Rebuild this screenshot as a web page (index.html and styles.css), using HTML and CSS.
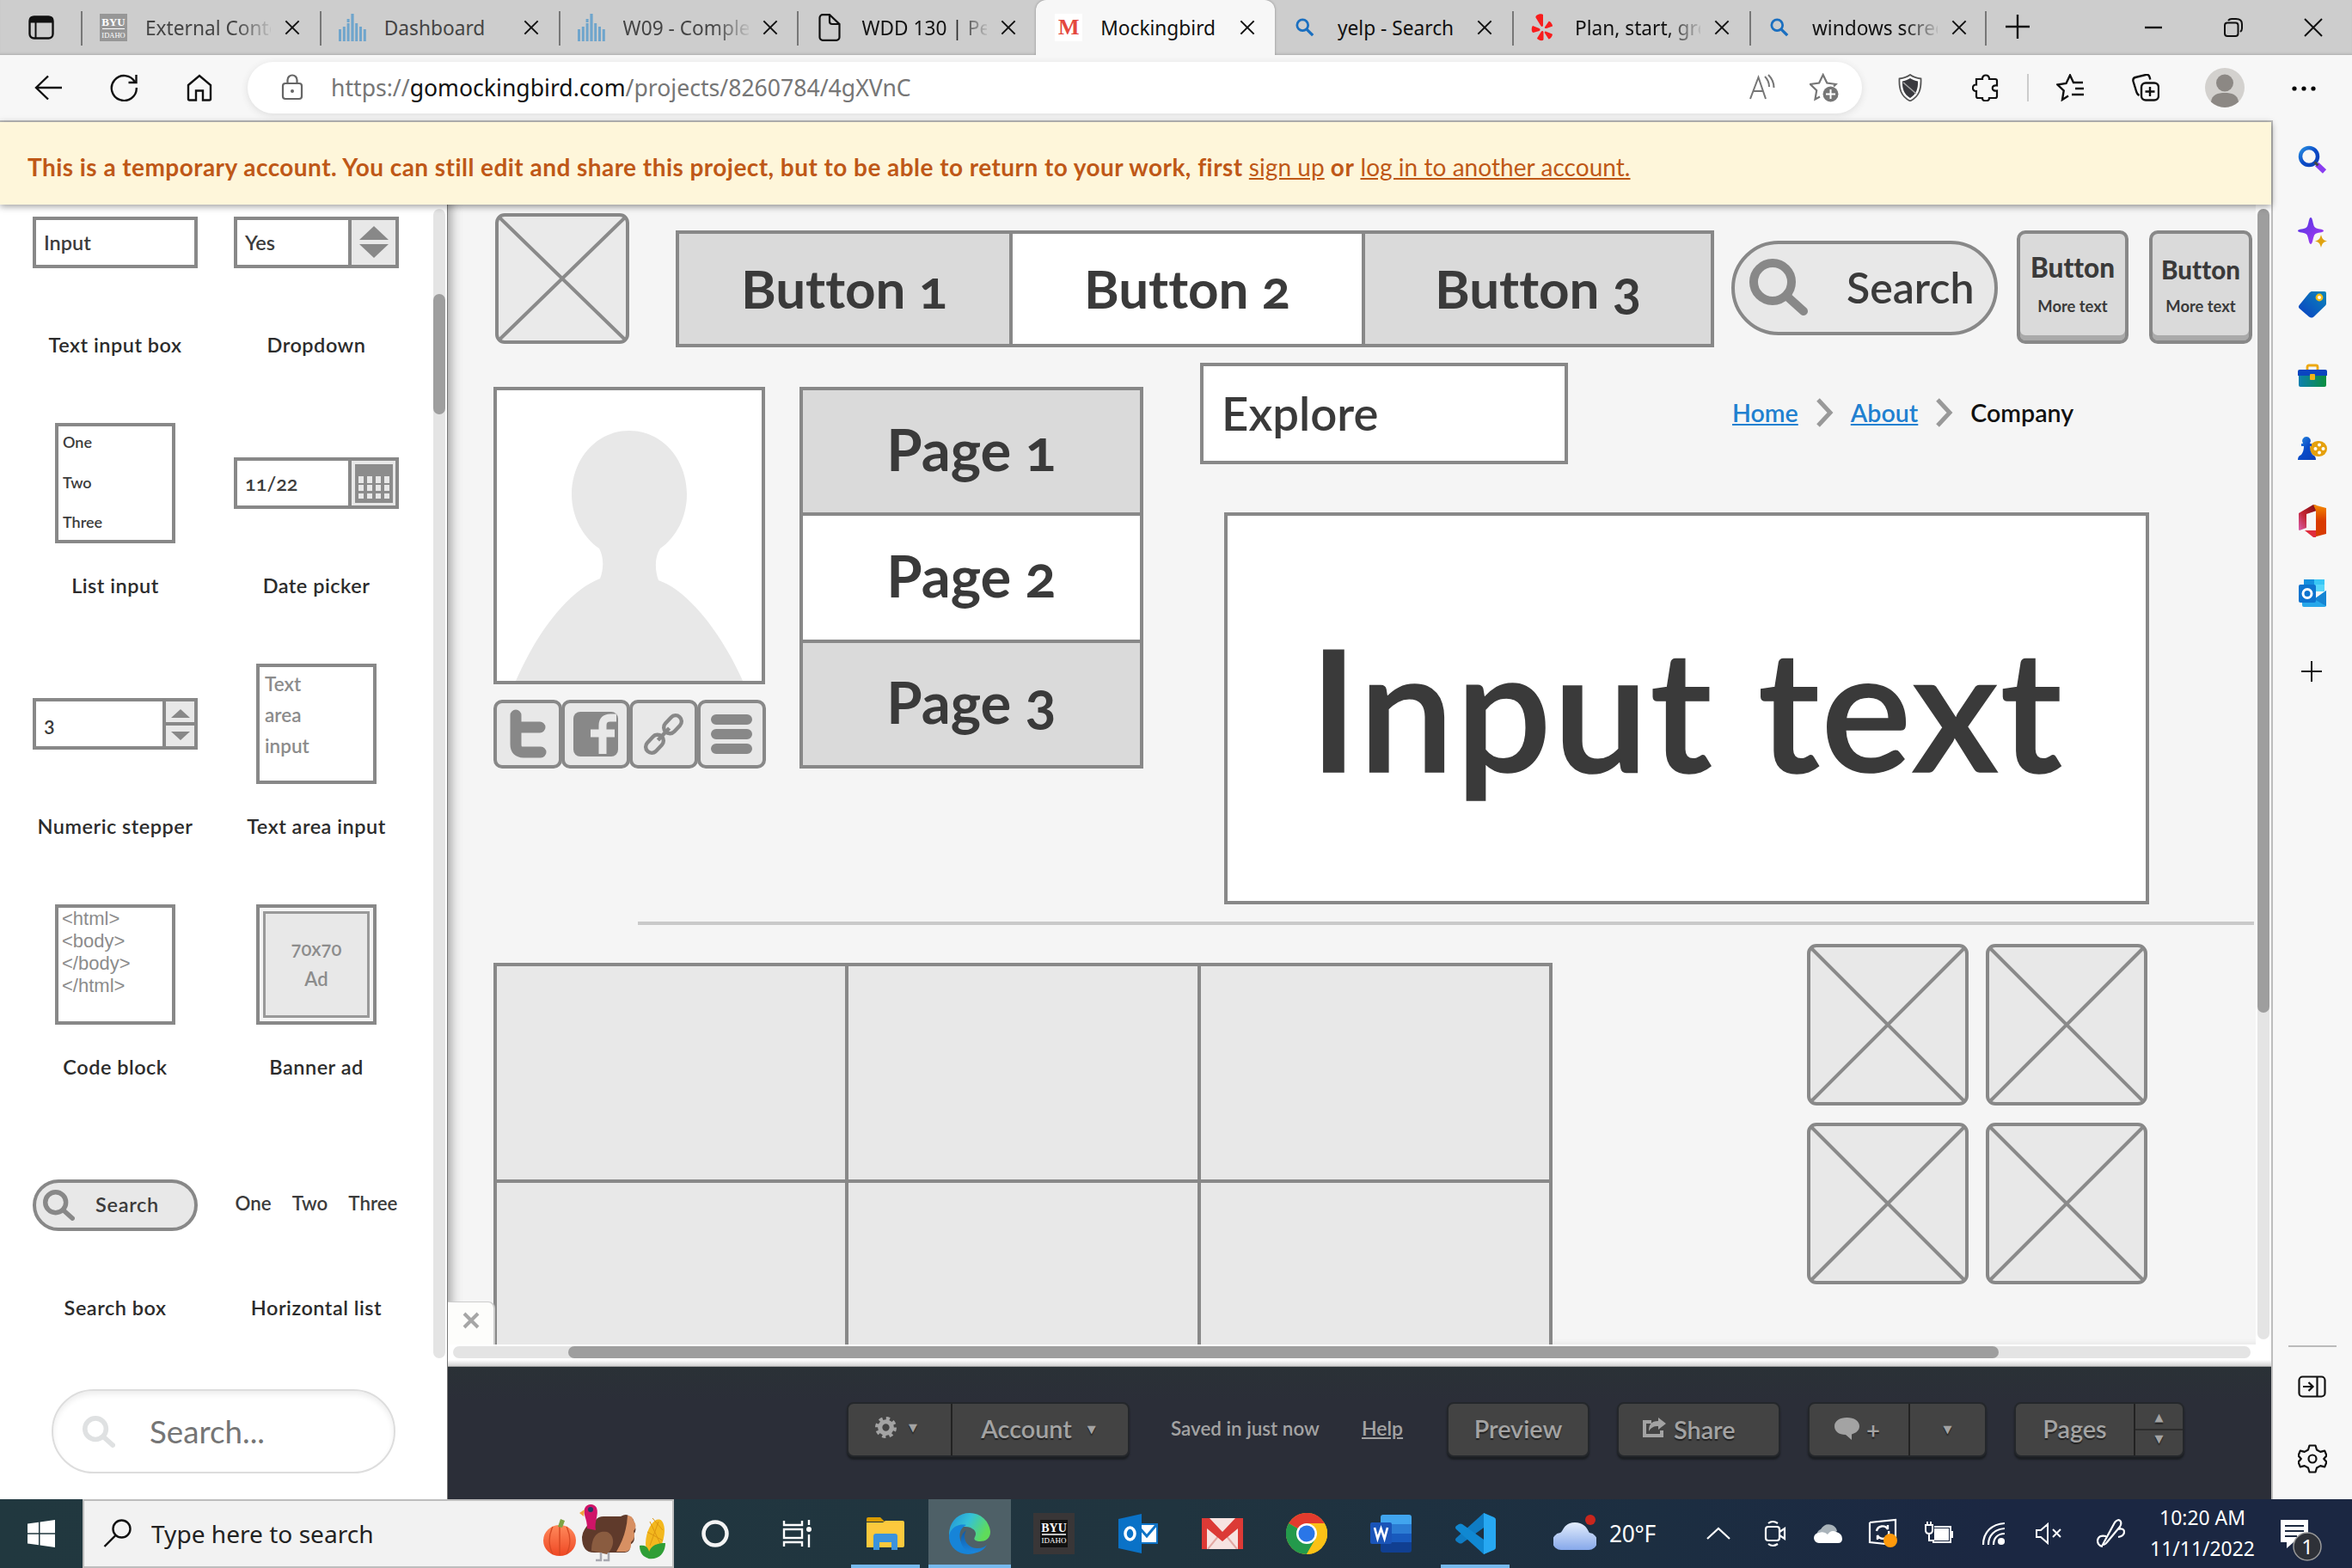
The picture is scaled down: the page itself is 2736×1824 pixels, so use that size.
FILE: index.html
```html
<!DOCTYPE html>
<html lang="en">
<head>
<meta charset="utf-8">
<title>Mockingbird</title>
<link rel="stylesheet" href="styles.css">
</head>
<body>
<svg class="defs" width="0" height="0">
  <defs>
    <linearGradient id="gBlue" x1="0" y1="0" x2="1" y2="1"><stop offset="0" stop-color="#2a8fe0"/><stop offset=".5" stop-color="#0a4bc8"/><stop offset="1" stop-color="#0d3fb5"/></linearGradient>
    <linearGradient id="gPurple" x1="0" y1="0" x2="1" y2="1"><stop offset="0" stop-color="#4a35e0"/><stop offset="1" stop-color="#b13bf5"/></linearGradient>
    <linearGradient id="gTag" x1="0" y1="1" x2="1" y2="0"><stop offset="0" stop-color="#0b3fc4"/><stop offset="1" stop-color="#0b86b8"/></linearGradient>
    <linearGradient id="gBox" x1="0" y1="0" x2="1" y2="0"><stop offset="0" stop-color="#0d7fb0"/><stop offset="1" stop-color="#0a8f3f"/></linearGradient>
    <linearGradient id="gOffL" x1="0" y1="1" x2="1" y2="0"><stop offset="0" stop-color="#d95fae"/><stop offset=".45" stop-color="#c22431"/><stop offset="1" stop-color="#7c0d12"/></linearGradient>
    <linearGradient id="gOffR" x1="0" y1="0" x2="0" y2="1"><stop offset="0" stop-color="#f58a00"/><stop offset=".5" stop-color="#d93a00"/><stop offset="1" stop-color="#d83b01"/></linearGradient>
    <linearGradient id="gEdge" x1="0" y1="0" x2="1" y2=".4"><stop offset="0" stop-color="#1f8fd6"/><stop offset=".5" stop-color="#35c1d8"/><stop offset="1" stop-color="#5fdc5a"/></linearGradient>
    <linearGradient id="gEdge2" x1="0" y1="0" x2="0" y2="1"><stop offset="0" stop-color="#0d58a6"/><stop offset="1" stop-color="#1b86dc"/></linearGradient>
    <linearGradient id="gCloud" x1="0" y1="0" x2="0" y2="1"><stop offset="0" stop-color="#e3edfc"/><stop offset="1" stop-color="#86a8ea"/></linearGradient>
    <linearGradient id="gPumpkin" x1="0" y1="0" x2="0" y2="1"><stop offset="0" stop-color="#ff8a5c"/><stop offset="1" stop-color="#ee4723"/></linearGradient>
    <symbol id="x" viewBox="0 0 20 20"><path d="M1.500 1.500 18.500 18.500M18.500 1.500 1.500 18.500" stroke="currentColor" stroke-width="2.200" fill="none"/></symbol>
    <symbol id="lens" viewBox="0 0 24 24"><circle cx="9" cy="9" r="7" fill="none" stroke="#1a6fc0" stroke-width="3"/><path d="m14 14 8 8" stroke="#1a6fc0" stroke-width="3.600"/></symbol>
    <symbol id="bars" viewBox="0 0 32 32"><path d="M0 18h3v14H0zM4.800 15h3v17h-3zM9.600 11h3v21h-3zM14.400 0h3.200v32h-3.200zM19.200 11h3v21h-3zM24 15h3v17h-3zM28.800 18h3v14h-3zM9.600 6h3v4h-3z" fill="#6fa5cc"/></symbol>
    <symbol id="byu" viewBox="0 0 32 32"><rect width="32" height="32" fill="#979797"/><text x="16" y="14" text-anchor="middle" class="byu-a">BYU</text><path d="M3 17.500h26" stroke="#fff" stroke-width="1"/><text x="16" y="28" text-anchor="middle" class="byu-b">IDAHO</text></symbol>
    <symbol id="magnify" viewBox="0 0 68 66"><circle cx="27" cy="27" r="22" fill="none" stroke="currentColor" stroke-width="10"/><path d="m43 43 20 18" stroke="currentColor" stroke-width="10" stroke-linecap="round"/></symbol>
    <symbol id="ph" viewBox="0 0 188 188"><rect x="2" y="2" width="184" height="184" rx="9" fill="#e8e8e8" stroke="#888" stroke-width="4"/><path d="M5 5 183 183M183 5 5 183" stroke="#8a8a8a" stroke-width="4"/></symbol>
  </defs>
</svg>

<header class="tabstrip">
  <div class="tabmenu"><svg width="30" height="28" viewBox="0 0 30 28"><rect x="1.500" y="1.500" width="27" height="25" rx="5" fill="none" stroke="#111" stroke-width="2.400"/><path d="M1 8.500V5a4 4 0 0 1 4-4h20a4 4 0 0 1 4 4v3.500z" fill="#111"/><path d="M8.500 8v18" stroke="#111" stroke-width="2"/></svg></div>
  <div class="tab"><svg class="fav"><use href="#byu"/></svg><span class="ttl fade dim">External Conte</span><svg class="cl"><use href="#x"/></svg></div>
  <div class="tab"><svg class="fav"><use href="#bars"/></svg><span class="ttl dim">Dashboard</span><svg class="cl"><use href="#x"/></svg></div>
  <div class="tab"><svg class="fav"><use href="#bars"/></svg><span class="ttl fade dim">W09 - Comple</span><svg class="cl"><use href="#x"/></svg></div>
  <div class="tab"><svg class="fav" viewBox="0 0 32 32"><path d="M16 1.200H8A3.500 3.500 0 0 0 4.500 4.700v22.600A3.500 3.500 0 0 0 8 30.800h16a3.500 3.500 0 0 0 3.500-3.500V12zM16 1.200V9a3 3 0 0 0 3 3h8.500" fill="none" stroke="#111" stroke-width="2.200"/></svg><span class="ttl fade">WDD 130 | Pe</span><svg class="cl"><use href="#x"/></svg></div>
  <div class="tab on"><span class="fav em">M</span><span class="ttl">Mockingbird</span><svg class="cl"><use href="#x"/></svg></div>
  <div class="tab"><svg class="fav sm"><use href="#lens"/></svg><span class="ttl">yelp - Search</span><svg class="cl"><use href="#x"/></svg></div>
  <div class="tab"><svg class="fav" viewBox="0 0 32 32" fill="#f81d1d"><path d="M9 1.500C12-.5 15 0 16 1v12.500c0 1.500-1.500 2-2.500.8L7.500 4.500C7 3.500 8 2 9 1.500zM4 14l7.500 3c1.500.8 1.500 2.500 0 3L4.500 22C2.500 22 2 16 4 14zM14 20.500c1-1 2.500-.5 2.500 1V30c-1 2.500-7 .5-7.500-1.500zM19 20.500l7.500 3c1.500 1-2 6.500-4 6l-4.500-7c-.7-1.200 0-2 1-2zM18 15.500l4.500-6.500c1.500-1 5 4 4.500 5.500l-7 2.500c-1.500.3-2.500-.5-2-1.500z"/></svg><span class="ttl fade">Plan, start, gro</span><svg class="cl"><use href="#x"/></svg></div>
  <div class="tab"><svg class="fav sm"><use href="#lens"/></svg><span class="ttl fade">windows scree</span><svg class="cl"><use href="#x"/></svg></div>
  <svg class="newtab" viewBox="0 0 28 28"><path d="M14 0v28M0 14h28" stroke="#111" stroke-width="2.400"/></svg>
  <div class="wincontrols">
    <svg width="22" height="22"><path d="M1 11h20" stroke="#111" stroke-width="2.400"/></svg>
    <svg width="22" height="22" fill="none" stroke="#111" stroke-width="2"><rect x="1" y="5.500" width="15.500" height="15.500" rx="3"/><path d="M5 3c1-1.500 2-2 4-2h5c4 0 7 2 7 6v5c0 2-.5 3-2 4"/></svg>
    <svg width="22" height="22"><path d="m1 1 20 20M21 1 1 21" stroke="#111" stroke-width="2"/></svg>
  </div>
</header>

<nav class="toolbar">
  <svg class="ic" viewBox="0 0 32 32"><path d="M16 2.500 2 16l14 13.500M2 16h30" fill="none" stroke="#111" stroke-width="2.400"/></svg>
  <svg class="ic" viewBox="0 0 32 32"><path d="M29 9.500A14.500 14.500 0 1 0 30.800 16M30.500 1v9h-9" fill="none" stroke="#111" stroke-width="2.400"/></svg>
  <svg class="ic" viewBox="0 0 32 32"><path d="M3 13 16 2l13 11v16a1.500 1.500 0 0 1-1.500 1.500H20V19.500h-8v11H4.500A1.500 1.500 0 0 1 3 29z" fill="none" stroke="#111" stroke-width="2.400"/></svg>
  <div class="address">
    <svg class="lock" viewBox="0 0 26 32"><rect x="2" y="11" width="22" height="18" rx="3" fill="none" stroke="#666" stroke-width="2.200"/><path d="M7.500 11V7a5.500 5.500 0 0 1 11 0v4" fill="none" stroke="#666" stroke-width="2.200"/><circle cx="13" cy="20" r="2" fill="#666"/></svg>
    <span class="url">https://<b>gomockingbird.com</b>/projects/8260784/4gXVnC</span>
    <svg class="ic aa" viewBox="0 0 32 32" fill="none" stroke="#767676" stroke-width="2"><path d="m2 29 9.500-25L20 29M5 20h12.500M19 3c3 3 5 6 5 12M23 1c4 4 6.500 9 6.500 15"/></svg>
    <svg class="ic" viewBox="0 0 34 34"><path d="M12 27.500 6.500 30.500 8.200 20.200.8 13l10.300-1.500L15.700 2l4.600 9.500L30.600 13l-2.500 2.500" fill="none" stroke="#767676" stroke-width="2.200"/><circle cx="24.500" cy="24.500" r="9" fill="#767676"/><path d="M24.500 19v11M19 24.500h11" stroke="#fff" stroke-width="2"/></svg>
  </div>
  <svg class="ic shield" viewBox="0 0 32 32"><path d="M16 1c4 3 8 4 12.500 4.500C29 17 27 26 16 31.500 5 26 3 17 3.500 5.500 8 5 12 4 16 1z" fill="#fff" stroke="#555" stroke-width="1.800"/><path d="M16 5c3 2 6 3 9 3.500C25.500 17 23 24 16 28 9 24 6.500 17 7 8.500 10 8 13 7 16 5z" fill="#3a3a3f"/><path d="m8 10 15 13" stroke="#aaa" stroke-width="1.500"/></svg>
  <svg class="ic" viewBox="0 0 32 32"><path d="M5 6h7c-.5-6 8.500-6 8 0h7a2 2 0 0 1 2 2v5.500c-7-1.500-7 7.500 0 6V26a2 2 0 0 1-2 2h-7c.5 4.500-8.500 4.500-8 0H7a2 2 0 0 1-2-2v-6c-5.500.5-5.500-8 0-7.500z" fill="none" stroke="#111" stroke-width="2.200"/></svg>
  <i class="tdiv"></i>
  <svg class="ic" viewBox="0 0 32 32" fill="none" stroke="#111" stroke-width="2.400"><path d="M14 25.500 7 30l1.700-10.500L1.500 12.500l10-1.500L16 1.500l4 8.500h11M22 17h10M18 24h14"/></svg>
  <svg class="ic" viewBox="0 0 32 32" fill="none" stroke="#111" stroke-width="2.400"><rect x="11" y="10.500" width="20" height="20" rx="5"/><path d="M21 15v11M15.500 20.500h11M8.500 25C6 24 5.500 22 5 20L1.500 8.500C1 6 2 4.500 4 4l12-3c2.500-.5 4 .5 4.500 2.500l.8 3"/></svg>
  <svg class="avatar" viewBox="0 0 46 46"><circle cx="23" cy="23" r="23" fill="#d3d1ce"/><circle cx="23" cy="17.500" r="10" fill="#8c8884"/><path d="M7 39.500C8 31 15 29 23 29s15 2 16 10.500c-9 8.500-23 8.500-32 0z" fill="#8c8884"/></svg>
  <svg class="ic" viewBox="0 0 32 32"><circle cx="5" cy="17" r="2.600"/><circle cx="16" cy="17" r="2.600"/><circle cx="27" cy="17" r="2.600"/></svg>
</nav>

<main class="main">
  <section class="page">
    <p class="banner"><b>This is a temporary account. You can still edit and share this project, but to be able to return to your work, first</b> <a>sign up</a> <b>or</b> <a>log in to another account.</a></p>
    <div class="app">
      <aside class="palette">
        <div class="scroll">
          <div class="widgets">
            <figure><div class="demo"><div class="field">Input</div></div><figcaption>Text input box</figcaption></figure>
            <figure><div class="demo"><div class="field">Yes<span class="end"><svg width="34" height="38" viewBox="0 0 34 38" fill="#888"><path d="M17 0 34 16H0zM0 21h34L17 37z"/></svg></span></div></div><figcaption>Dropdown</figcaption></figure>
            <figure><div class="demo"><div class="sq list"><span>One</span><span>Two</span><span>Three</span></div></div><figcaption>List input</figcaption></figure>
            <figure><div class="demo"><div class="field num">11/22<span class="end"><svg width="44" height="45" viewBox="0 0 44 45"><path d="M0 0h44v45H0z" fill="#8c8c8c"/><path d="M4 14h6v8H4zm10 0h6v8h-6zm10 0h6v8h-6zm10 0h6v8h-6zM4 24h6v7H4zm10 0h6v7h-6zm10 0h6v7h-6zm10 0h6v7h-6zM4 34h6v6H4zm10 0h6v6h-6zm10 0h6v6h-6zm10 0h6v6h-6z" fill="#e8e8e8"/></svg></span></div></div><figcaption>Date picker</figcaption></figure>
            <figure><div class="demo"><div class="field">3<span class="end thin"><svg width="33" height="52" viewBox="1 0 33 52"><path d="M0 26h36" stroke="#888" stroke-width="4"/><path d="M18 9 29 19H7zM7 35h22L18 45z" fill="#888"/></svg></span></div></div><figcaption>Numeric stepper</figcaption></figure>
            <figure><div class="demo"><div class="sq area">Text<br>area<br>input</div></div><figcaption>Text area input</figcaption></figure>
            <figure><div class="demo"><div class="sq code">&lt;html&gt;<br>&lt;body&gt;<br>&lt;/body&gt;<br>&lt;/html&gt;</div></div><figcaption>Code block</figcaption></figure>
            <figure><div class="demo"><div class="sq ad"><div>70x70<br>Ad</div></div></div><figcaption>Banner ad</figcaption></figure>
            <figure><div class="demo"><div class="pill"><svg width="37" height="36"><use href="#magnify"/></svg><span>Search</span></div></div><figcaption>Search box</figcaption></figure>
            <figure><div class="demo hl"><span>One</span><span>Two</span><span>Three</span></div><figcaption>Horizontal list</figcaption></figure>
          </div>
        </div>
        <div class="track"><i></i></div>
        <div class="find"><svg width="38" height="39"><use href="#magnify"/></svg><span>Search...</span></div>
      </aside>

      <div class="workspace">
        <div class="canvas">
          <div class="board">
            <svg class="el logo" viewBox="0 0 156 152"><rect x="2" y="2" width="152" height="148" rx="9" fill="#eaeaea" stroke="#888" stroke-width="4"/><path d="m5 5 146 142M151 5 5 147" stroke="#8a8a8a" stroke-width="4"/></svg>
            <div class="el btns"><span>Button 1</span><span class="sel">Button 2</span><span>Button 3</span></div>
            <div class="el search"><svg width="68" height="66"><use href="#magnify"/></svg><span>Search</span></div>
            <div class="el key k1"><b>Button</b><small>More text</small></div>
            <div class="el key k2"><b>Button</b><small>More text</small></div>
            <div class="el explore">Explore</div>
            <div class="el crumbs"><a>Home</a><svg width="21" height="34"><path d="m3 2 14 15L3 32" fill="none" stroke="#999" stroke-width="5"/></svg><a>About</a><svg width="21" height="34"><path d="m3 2 14 15L3 32" fill="none" stroke="#999" stroke-width="5"/></svg><span>Company</span></div>
            <div class="el hero">Input text</div>
            <svg class="el user" viewBox="0 0 316 346"><rect x="2" y="2" width="312" height="342" fill="#fff" stroke="#888" stroke-width="4"/><path d="M26 342C52 283 88 237 124 223c4-10 5-24-1-35C104 175 91 151 91 125c0-40 28-74 67-74s67 34 67 74c0 26-12 50-31 63-7 11-6 26-2 37 34 12 72 59 98 117z" fill="#e8e8e8"/></svg>
            <div class="el social">
              <svg viewBox="0 0 80 80"><rect class="sb" x="2" y="2" width="76" height="76" rx="8"/><path d="M26 18v34q0 9 9 9h20M26 32h28" fill="none" stroke="#888" stroke-width="13" stroke-linecap="round" stroke-linejoin="round"/></svg>
              <svg viewBox="0 0 80 80"><rect class="sb" x="2" y="2" width="76" height="76" rx="8"/><rect x="14" y="14" width="52" height="52" rx="8" fill="#888"/><path d="M48 63V30q0-9 9-9h7M34 39h28" fill="none" stroke="#e8e8e8" stroke-width="9"/></svg>
              <svg viewBox="0 0 80 80"><rect class="sb" x="2" y="2" width="76" height="76" rx="8"/><g fill="none" stroke="#888" stroke-width="5" transform="translate(40 40) scale(.88) rotate(-47) translate(-40 -40)"><rect x="9" y="32" width="27" height="16" rx="8"/><rect x="44" y="32" width="27" height="16" rx="8"/><path d="M29 40h22"/></g></svg>
              <svg viewBox="0 0 80 80"><rect class="sb" x="2" y="2" width="76" height="76" rx="8"/><path d="M22 23h36M22 40h36M22 57h36" stroke="#888" stroke-width="12" stroke-linecap="round"/></svg>
            </div>
            <div class="el pages"><span>Page 1</span><span class="sel">Page 2</span><span>Page 3</span></div>
            <div class="el rule"></div>
            <div class="el table"><i></i><i></i><i></i><i></i><i></i><i></i></div>
            <div class="el thumbs"><svg><use href="#ph"/></svg><svg><use href="#ph"/></svg><svg><use href="#ph"/></svg><svg><use href="#ph"/></svg></div>
          </div>
          <div class="vtrack"><i></i></div>
          <div class="collapse"><svg width="20" height="20" viewBox="0 0 20 20"><path d="m2 2 16 16M18 2 2 18" stroke="#a6a6a6" stroke-width="4"/></svg></div>
        </div>
        <div class="hbar"><div class="htrack"><i></i></div></div>
        <div class="dock">
          <div class="group g1"><span class="c1"><svg width="25" height="25" viewBox="0 0 24 24" fill="none" stroke="#a3a3a3"><circle cx="12" cy="12" r="6.500" stroke-width="5"/><circle cx="12" cy="12" r="10" stroke-width="4" stroke-dasharray="4 3.850"/></svg><em>▼</em></span><span class="c2">Account<em>▼</em></span></div>
          <span class="saved">Saved in just now</span><a class="help">Help</a>
          <div class="group g2"><span>Preview</span></div>
          <div class="group g3"><span><svg width="28" height="24" viewBox="0 0 28 24"><path d="M11 5H3v16h20v-6" fill="none" stroke="#a3a3a3" stroke-width="4"/><path d="M8 16c0-8 3-12 11-12V0l9 7-9 7v-4c-5 0-8 1-11 6z" fill="#a3a3a3"/></svg>Share</span></div>
          <div class="group g4"><span class="c1"><svg width="29" height="26" viewBox="0 0 29 26"><path d="M14.500 0C23 0 29 4 29 10c0 5-4 8-9 9.500V26l-7-6C5 20 0 16 0 10S6 0 14.500 0z" fill="#a3a3a3"/></svg>+</span><span class="c2"><em>▼</em></span></div>
          <div class="group g5"><span class="c1">Pages</span><span class="c2"><em>▲</em><em>▼</em></span></div>
        </div>
      </div>
    </div>
  </section>

  <aside class="side">
    <svg viewBox="0 0 34 40"><circle cx="13" cy="16" r="10" fill="none" stroke="url(#gBlue)" stroke-width="4.500"/><path d="m22 25 9 8.500" stroke="#8a3df0" stroke-width="6"/><path d="m19.500 22.500 4 4" stroke="#444" stroke-width="3"/></svg>
    <svg viewBox="0 0 34 40"><path d="M15 3c2.500 0 2.500 10 5 11.500C22 17 30 16 30 18.500S22 20 20 22.500c-2.500 2-2.500 11.500-5 11.500s-2.500-9.500-5-11.500C8 20 0 21 0 18.500S8 17 10 14.500C12.500 13 12.500 3 15 3z" fill="url(#gPurple)"/><path d="M27 23c1.500 5 2 6 7 7.500-5 1.500-5.500 2.500-7 7.500-1.500-5-2-6-7-7.500 5-1.500 5.500-2.500 7-7.500z" fill="#e0a310"/></svg>
    <svg viewBox="0 0 34 40"><path d="M16 5h15a2 2 0 0 1 2 2v12c0 1-.5 2-1 2.500L19 34c-2 2-4 2-6 .5L2 25c-1.500-1.500-1.500-3 0-4.500L13 7c1-1 2-2 3-2z" fill="url(#gTag)"/><circle cx="25" cy="12" r="3.200" fill="#fff" stroke="#efbd17" stroke-width="2.400"/></svg>
    <svg viewBox="0 0 34 40"><path d="M11 13V9q0-2 2-2h8q2 0 2 2v4" fill="none" stroke="#eda812" stroke-width="2.800"/><path d="M1 18h32v12a2 2 0 0 1-2 2H3a2 2 0 0 1-2-2z" fill="url(#gBox)"/><path d="M0 14q0-2 2-2h30q2 0 2 2v5H0z" fill="#0a45c0"/><rect x="14" y="17" width="6" height="7" rx="1" fill="#efb31a"/></svg>
    <svg viewBox="0 0 34 40"><rect x="14" y="11" width="20" height="18" rx="9" fill="#e5a00d"/><g fill="#fff"><circle cx="25" cy="15.500" r="2"/><circle cx="20.500" cy="20" r="2"/><circle cx="29.500" cy="20" r="2"/><circle cx="25" cy="24.500" r="2"/></g><path d="M10 6a5 5 0 0 1 4 8h2v3h-2c0 4 1 7 3 10 3 1 4 3 4 6H0c0-3 1-5 4-6 2-3 3-6 3-10H4v-3h2a5 5 0 0 1 4-8z" fill="url(#gBlue)"/></svg>
    <svg viewBox="0 0 34 40"><path d="M1 11 18 1l4 1v6l-12 4v16l-8 3c-1 0-1-1-1-2z" fill="url(#gOffL)"/><path d="m18 1 15 4v30l-15 4 3-5V8z" fill="url(#gOffR)"/><path d="M8 31h13v8h-3z" fill="#e02c3c"/></svg>
    <svg viewBox="0 0 34 40"><path d="M7 4h24v13H7z" fill="#38c6f5"/><path d="M7 4h12v7H7z" fill="#1490df"/><path d="M19 10h12v8H19z" fill="#57d6fa"/><path d="m5 20 14 7 14-10v17a2 2 0 0 1-2 2H7a2 2 0 0 1-2-2z" fill="#28a8ea"/><path d="m33 17-14 10 14 8z" fill="#1685d3"/><rect x="1" y="10" width="20" height="21" rx="2" fill="#0f74cf"/><circle cx="11" cy="20.500" r="5" fill="none" stroke="#fff" stroke-width="3"/></svg>
    <svg class="add" viewBox="0 0 34 40"><path d="M16 8v24M4 20h24" stroke="#111" stroke-width="2"/></svg>
    <i class="sdiv"></i>
    <svg class="b1" viewBox="0 0 34 40" fill="none" stroke="#111" stroke-width="2.200"><rect x="1.500" y="8.500" width="30" height="23" rx="4"/><path d="M22.500 9v22M6 20h11M12.500 15l5 5-5 5"/></svg>
    <svg viewBox="0 0 34 40" fill="none" stroke="#111" stroke-width="2.200"><circle cx="17" cy="20" r="4.500"/><path d="M13.500 4.500h7l1.500 5 4.200 2.400 5-1.300 2.300 5.700-3.300 3.700 3.300 3.700-2.300 5.700-5-1.300-4.200 2.400-1.500 5h-7l-1.500-5-4.200-2.400-5 1.300-2.300-5.700L3.800 20 .5 16.300l2.300-5.700 5 1.300L12 9.500z" stroke-linejoin="round"/></svg>
  </aside>
</main>

<footer class="taskbar">
  <div class="start"><svg width="32" height="32" viewBox="0 0 32 32" fill="#fff"><path d="M0 4.500 13 2.700V15.300H0zM14.500 2.500 32 0v15.300H14.500zM0 16.700h13v12.600L0 27.500zM14.500 16.700H32V32l-17.500-2.500z"/></svg></div>
  <div class="tsearch">
    <svg width="34" height="34" viewBox="0 0 34 34"><circle cx="21.500" cy="11.500" r="10" fill="none" stroke="#111" stroke-width="2.400"/><path d="M14.500 19 1.500 32" stroke="#111" stroke-width="2.400"/></svg>
    <span>Type here to search</span>
    <svg class="turkey" width="146" height="72" viewBox="0 0 146 72">
      <ellipse cx="20" cy="44" rx="19" ry="18" fill="url(#gPumpkin)"/><path d="M20 27v34M12 28c-5 10-5 22 0 32M28 28c5 10 5 22 0 32" stroke="#d64a25" stroke-width="1.500" fill="none"/><path d="m18 28 3-9 5 2-3 8z" fill="#7ea345"/>
      <path d="M62 20q3-4 9-4h20q7-4 10 0 7 3 5 9 5 6 0 12 3 8-4 12 1 8-6 9H60q-14 0-14-18 2-14 16-20z" fill="#5f3a2b"/><path d="M99 15q6 0 7 6 5 6 0 12 3 8-3 13 1 10-6 11H86q12-20 13-42z" fill="#d79063"/><path d="M57 56c0-18 8-24 18-22 10 4 9 18 0 26z" fill="#8a5c40"/><path d="M52 30c0-12-5-16-3-23C51 1 60 0 63 6c3 8-3 16-1 26z" fill="#cf1468"/><path d="m49 8-6 4 5 4z" fill="#f1a33c"/><circle cx="56" cy="8" r="3" fill="#223d63"/><path d="M68 58v9h-6m15-9v9h-6" stroke="#a8a8b0" stroke-width="2.500" fill="none"/>
      <ellipse cx="131" cy="40" rx="10" ry="21" fill="#f3b81e" transform="rotate(14 131 40)"/><path d="M125 22l14 30M135 22l-10 28M122 34l18 10M128 18l12 14" stroke="#dc9612" stroke-width="1"/><path d="M113 50c10-2 12 6 12 15-8-1-12-7-12-15zM123 65c0-14 8-18 20-18 0 12-8 20-20 18z" fill="#2f9e36"/>
    </svg>
  </div>
  <div class="apps">
    <span><svg width="34" height="34"><circle cx="17" cy="17" r="13.500" fill="none" stroke="#f4f4f4" stroke-width="4.500"/></svg></span>
    <span class="tv"><svg width="34" height="32" viewBox="0 0 34 32" fill="none" stroke="#fff" stroke-width="2.400"><path d="M2 1v5h21V1M2 31v-5h21v5"/><rect x="2" y="11" width="21" height="10"/><path d="M31 0v6M31 17v15"/><circle cx="31" cy="11" r="3" fill="#fff" stroke="none"/></svg></span>
    <span class="run two"><svg width="44" height="38" viewBox="0 0 44 38"><path d="M0 2q0-2 2-2h14l5 5H0z" fill="#d99b00"/><path d="M0 6h19l3-2h20q2 0 2 2v27q0 2-2 2H0z" fill="#fcc93d"/><path d="M8 38V22q0-3 3-3h22q3 0 3 3v16h-7V29H15v9z" fill="#3b93dd"/></svg></span>
    <span class="run act"><svg width="48" height="48" viewBox="0 0 48 48"><path d="M24 0a24 24 0 0 1 24 22c0 8-6 11-12 11-5 0-8-2-6-5 4-7-4-13-13-12C8 17 2 23 0 28-1 12 9 0 24 0z" fill="url(#gEdge)"/><path d="M0 26C2 17 11 12 20 14c-6 3-9 9-7 17 2 9 12 15 21 13-3 3-8 4-12 4C9 48-1 38 0 26z" fill="#1684d8"/><path d="M20 20c-5 9 0 20 12 21 5 .5 9-1 12-4-5 9-14 11-21 8-10-4-13-18-3-25z" fill="url(#gEdge2)"/></svg></span>
    <span><svg width="48" height="48" viewBox="0 0 48 48"><path d="M0 0h48v48H0z" fill="#393637"/><path d="M8 8h32v32H8z" fill="#111"/><text x="24" y="22" text-anchor="middle" class="byu-c">BYU</text><path d="M10 25h28" stroke="#fff" stroke-width="1.500"/><text x="24" y="35" text-anchor="middle" class="byu-d">IDAHO</text></svg></span>
    <span><svg width="46" height="46" viewBox="0 0 46 46"><path d="M24 12h21v22H24z" fill="#fff" stroke="#0f73c6" stroke-width="2"/><path d="m26 18 7 8 11-13" fill="none" stroke="#0f73c6" stroke-width="3"/><path d="M0 6 27 0v46L0 40z" fill="#0a72c7"/><ellipse cx="13.500" cy="23" rx="5.500" ry="7" fill="none" stroke="#fff" stroke-width="3.500"/></svg></span>
    <span><svg width="48" height="36" viewBox="0 0 48 36"><path d="M0 0h48v36H0z" fill="#f6e3e1"/><path d="m7 36 13-16M41 36 28 20" stroke="#e3a8a3" stroke-width="2"/><path d="M0 0h9l15 16L39 0h9v36h-6V12L24 27 6 12v24H0z" fill="#dc3a36"/></svg></span>
    <span><svg width="48" height="48" viewBox="0 0 48 48"><circle cx="24" cy="24" r="24" fill="#fbc116"/><path d="M24 24 3.200 12A24 24 0 0 1 44.800 12z" fill="#e33b2e"/><path d="M3.200 12A24 24 0 0 0 24 48l10.400-18z" fill="#239a4c"/><path d="M24 12h20.800A24 24 0 0 1 24 48l10.400-18z" fill="#fbc116"/><circle cx="24" cy="24" r="12" fill="#fff"/><circle cx="24" cy="24" r="9.500" fill="#2a76e8"/></svg></span>
    <span><svg width="48" height="44" viewBox="0 0 48 44"><path d="M12 3q0-3 3-3h30q3 0 3 3v9H12z" fill="#41a5ee"/><path d="M12 11h36v11H12z" fill="#2b7cd3"/><path d="M12 22h36v11H12z" fill="#185abd"/><path d="M12 32h36v9q0 3-3 3H15q-3 0-3-3z" fill="#103f91"/><rect y="9" width="25" height="25" rx="2" fill="#1a54b8"/><path d="m5 15 3.500 13L12.500 16l4 12L20 15" fill="none" stroke="#fff" stroke-width="2.600"/></svg></span>
    <span class="run"><svg width="48" height="48" viewBox="0 0 48 48"><path d="M34 0 2 29q-2 2 0 4l3 2q2 1 4 0L48 7z" fill="#0f7cc4"/><path d="M34 48 2 19q-2-2 0-4l3-2q2-1 4 0l39 28z" fill="#1088d2"/><path d="M34 0l12 5q2 1 2 3v32q0 2-2 3l-12 5z" fill="#27a8f2"/></svg></span>
  </div>
  <div class="weather"><svg width="50" height="46" viewBox="0 0 50 46"><path d="M10 42a10 10 0 0 1-2-20c4-2 4-12 17-12s15 10 17 12a10 10 0 0 1-2 20z" fill="url(#gCloud)"/><circle cx="43" cy="7" r="6" fill="#c8261d"/></svg><span>20°F</span></div>
  <div class="tray">
    <span><svg width="28" height="16"><path d="m1 14 13-12 13 12" fill="none" stroke="#fff" stroke-width="2.200"/></svg></span>
    <span class="cam"><svg width="26" height="32" viewBox="0 0 26 32" fill="none" stroke="#fff" stroke-width="2.200"><rect x="2" y="8" width="16" height="16" rx="3"/><path d="m18 14 6-4v12l-6-4M5 4q5-4 11 0M5 28q5 4 11 0"/></svg></span>
    <span><svg width="34" height="24" viewBox="0 0 34 24"><path d="M8 20a7 7 0 0 1 0-13Q13-1 21 2q5 2 6 7z" fill="#a9b3ba"/><path d="M6 23a6 6 0 0 1 0-12q6-2 10 2 4-6 10-3 7 2 7 8 0 5-5 5z" fill="#fff"/></svg></span>
    <span><svg width="36" height="36" viewBox="0 0 36 36"><path d="M2 5 32 2v20M2 5v23l18 2" fill="none" stroke="#fff" stroke-width="2.200"/><path d="M10 15a7 7 0 0 1 13-2v-5M24 15a7 7 0 0 1-13 5v5" fill="none" stroke="#fff" stroke-width="2.400"/><circle cx="26" cy="26" r="8" fill="#ff9a0c"/></svg></span>
    <span><svg width="34" height="28" viewBox="0 0 34 28"><path d="M2 4v6q0 4 4 4t4-4V4zM4 0v4M8 0v4M6 14v8h6" fill="none" stroke="#fff" stroke-width="2"/><path d="M12 8h17v14H12z" fill="#fff"/><path d="M12 6h19v18H10M33 11v8" fill="none" stroke="#fff" stroke-width="2"/></svg></span>
    <span><svg width="28" height="28" viewBox="0 0 28 28" fill="none" stroke="#fff" stroke-width="2.200"><path d="M2 27C2 12 12 3 27 2M8 27C8 16 15 9 27 8M14 27c0-8 5-13 13-13"/><circle cx="23" cy="23" r="3" fill="#fff"/></svg></span>
    <span><svg width="32" height="26" viewBox="0 0 32 26" fill="none" stroke="#fff" stroke-width="2"><path d="M2 9h5l8-7v22l-8-7H2zM21 8l9 9M30 8l-9 9"/></svg></span>
    <span class="pen"><svg width="34" height="34" viewBox="0 0 34 34" fill="none" stroke="#fff" stroke-width="2.200"><path d="M9 28 22 4q4-5 7-1 1 3-1 6L13 27q-2 3-5 3zM12 20q-9-2-10 5 0 6 6 7M25 12q8-2 8 3t-7 6"/></svg></span>
  </div>
  <div class="clock"><span>10:20 AM</span><span>11/11/2022</span></div>
  <div class="notif"><svg width="50" height="52" viewBox="0 0 50 52"><path d="M0 2h32v26H15l-8 7v-7H0z" fill="#fff"/><path d="M5 9h22M5 15h22M5 21h14" stroke="#1d2a40" stroke-width="2"/><circle cx="31" cy="33" r="16" fill="#2e3138" stroke="#999" stroke-width="1.500"/><text x="31" y="42" text-anchor="middle" class="badge">1</text></svg></div>
</footer>
</body>
</html>
```

FILE: styles.css
```css
* { box-sizing: border-box; }
body {
  margin: 0; width: 2736px; height: 1824px; overflow: hidden;
  display: flex; flex-direction: column;
  font-family: "Noto Sans", "Open Sans", sans-serif; color: #111; background: #f7f7f7;
}
svg { display: block; flex: none; }
a { text-decoration: underline; }
.defs { position: absolute; }

/* tab strip */
.tabstrip { height: 64px; flex: none; display: flex; background: #cdcdcd; box-shadow: inset 0 -3px 3px -2px #aaa; }
.tabmenu { width: 94px; padding: 18px 0 0 33px; }
.tab { width: 277.800px; display: flex; align-items: center; padding-left: 20px; position: relative; border-left: 2px solid transparent; background: linear-gradient(#777, #777) no-repeat left 13px / 2px 40px; background-origin: border-box; }
.tab.on { background: #f7f7f7; border-radius: 12px 12px 0 0; box-shadow: 0 0 3px #888; clip-path: inset(0 -4px 0 -4px); }
.tab.on ~ .tab { width: 276px; padding-left: 18px; }
.tab.on + .tab { background: none; }
.fav { width: 32px; height: 32px; margin-right: 21px; flex: none; }
.fav.sm { width: 22px; height: 22px; margin: 0 27px 0 4px; }
.fav.em { background: #fff; color: #e4483e; font: bold 26px/32px "Liberation Serif", serif; text-align: center; }
.ttl { width: 146px; font-size: 22.700px; white-space: nowrap; margin-right: 16px; flex: none; }
.dim { color: #444; }
.fade { -webkit-mask-image: linear-gradient(90deg, #000 106px, transparent 150px); mask-image: linear-gradient(90deg, #000 106px, transparent 150px); }
.cl { width: 18px; height: 18px; color: #111; }
.newtab { width: 28px; height: 28px; margin: 17px 0 0 22px; }
.tab:nth-child(9) { border-right: 2px solid #777; border-image: linear-gradient(transparent 13px, #777 13px, #777 53px, transparent 53px) 0 2 0 0; }
.wincontrols { margin-left: 133px; display: flex; gap: 71px; align-items: center; }
.byu-a { font: bold 13px "Liberation Serif", serif; fill: #fff; }
.byu-b { font: 8.500px "Liberation Serif", serif; fill: #fff; }
.byu-c { font: bold 14px "Liberation Serif", serif; fill: #fff; }
.byu-d { font: 9px "Liberation Serif", serif; fill: #fff; }

/* navigation bar */
.toolbar { height: 76px; flex: none; display: flex; align-items: center; gap: 56px; padding-left: 40px; }
.ic { width: 32px; height: 32px; }
.address { width: 1878px; height: 60px; margin: 0 -16px; border-radius: 30px; background: #fff; box-shadow: 0 2px 8px #ddd; display: flex; align-items: center; padding-left: 39px; }
.lock { width: 26px; height: 32px; }
.url { font-size: 26.600px; color: #767676; margin-left: 32px; white-space: nowrap; }
.url b { font-weight: 400; color: #111; }
.aa { margin: 0 39px 0 auto; }
.address .ic:last-child { width: 34px; height: 34px; margin-right: 27px; }
.tdiv { width: 2px; height: 32px; background: #ccc; margin: 0 -24px; }
.avatar { width: 46px; height: 46px; margin: 0 -3px 0 -3px; }

/* browser content */
.main { height: 1604px; flex: none; display: flex; }
.page { width: 2644px; border: solid #bdbdbd; border-width: 2px 2px 0 0; display: flex; flex-direction: column; font-family: Lato, "Open Sans", sans-serif; font-variant-ligatures: none; font-variant-numeric: oldstyle-nums; }
.banner { margin: 0; height: 96px; flex: none; background: #fef6da; color: #bf5817; font-size: 28px; line-height: 104px; padding-left: 32px; white-space: nowrap; position: relative; z-index: 2; box-shadow: 0 2px 8px rgba(0,0,0,.4); }
.banner b { letter-spacing: .45px; }
.banner a { letter-spacing: .05px; }
.app { flex: 1; display: flex; min-height: 0; }

/* widget palette */
.palette { width: 521px; border-right: 1px solid #777; background: #fff; position: relative; display: flex; flex-direction: column; }
.scroll { height: 1342px; overflow: hidden; }
.widgets { display: grid; grid-template-columns: 234px 234px; grid-auto-rows: 280px; margin: -56px 0 0 17px; }
figure { margin: 0; }
.demo { height: 200px; display: flex; align-items: center; justify-content: center; font-size: 23.500px; line-height: 50px; font-weight: 600; color: #3c3c3c; }
figcaption { height: 40px; line-height: 38px; text-align: center; font-size: 23.500px; font-weight: 600; color: #2c2c2c; letter-spacing: .5px; white-space: nowrap; }
.field { width: 192px; height: 60px; border: 4px solid #888; background: #fff; display: flex; align-items: center; justify-content: space-between; padding-left: 9px; }
.end { align-self: stretch; width: 55px; border-left: 4px solid #888; background: #e8e8e8; display: flex; align-items: center; justify-content: center; }
.end.thin { width: 37px; }
.sq { width: 140px; height: 140px; border: 4px solid #888; background: #fff; }
.list { display: flex; flex-direction: column; justify-content: space-between; font-size: 18px; line-height: 20px; padding: 8px 5px 11px; }
.area { font-size: 22.500px; line-height: 36px; color: #8c8c8c; padding: 2px 6px; }
.code { font: 22px/26px "Liberation Sans", sans-serif; color: #8c8c8c; padding-left: 4px; }
.ad { padding: 4px; background: #f4f4f4; }
.ad div { height: 100%; border: 3px solid #999; background: #e8e8e8; font-size: 22px; line-height: 35px; text-align: center; color: #8c8c8c; padding-top: 23px; }
.pill { width: 192px; height: 60px; border: 4px solid #888; border-radius: 30px; background: #e8e8e8; display: flex; align-items: center; gap: 24px; padding-left: 8px; letter-spacing: .7px; }
.pill svg { color: #888; }
.pill span { padding-bottom: 2px; }
.hl { gap: 24px; font-size: 22.300px; padding-bottom: 4px; }
.track { position: absolute; left: 504px; top: 5px; width: 14px; height: 1337px; border-radius: 7px; background: #e4e4e4; }
.track i { display: block; height: 140px; margin-top: 99px; border-radius: 7px; background: #9e9e9e; }
.find { width: 400px; height: 98px; margin: 36px 0 0 60px; border: 2px solid #ddd; border-radius: 49px; box-shadow: inset 0 4px 6px #eee; display: flex; align-items: center; gap: 40px; padding-left: 34px; font-size: 36.700px; color: #757575; }
.find svg { color: #dfe1e2; }

/* workspace */
.workspace { flex: 1; display: flex; flex-direction: column; min-width: 0; }
.canvas { height: 1326px; position: relative; overflow: hidden; background: #fff; }
.board { position: absolute; left: -1px; top: 0; width: 2104px; height: 1326px; overflow: hidden; background: #f5f5f5; box-shadow: inset 12px 0 14px -8px #999; color: #3a3a3a; font-weight: 700; }
.el { position: absolute; white-space: nowrap; }
.logo { left: 56px; top: 10px; width: 156px; height: 152px; }
.btns { left: 266px; top: 30px; width: 1208px; height: 136px; display: grid; grid-template-columns: 384px 406px 1fr; gap: 4px; padding: 4px; background: #888; font-size: 62px; }
.btns span, .pages span { background: #dadada; display: flex; align-items: center; justify-content: center; padding-bottom: 2px; }
.btns .sel, .pages .sel { background: #fff; }
.search { left: 1494px; top: 42px; width: 310px; height: 110px; border: 4px solid #888; border-radius: 55px; background: #e8e8e8; display: flex; align-items: center; padding: 0 0 2px 17px; gap: 45px; font-size: 50px; font-weight: 600; }
.search svg { color: #888; }
.key { top: 30px; height: 132px; border: 4px solid #888; border-radius: 10px; background: #dadada; box-shadow: inset 0 -6px #aaa; display: flex; flex-direction: column; align-items: center; line-height: 32px; }
.key small { font-size: 18.400px; }
.k1 { left: 1826px; width: 130px; padding-top: 23px; font-size: 31.500px; }
.k1 small { margin-top: 13px; }
.k2 { left: 1980px; width: 120px; padding-top: 26px; font-size: 29.500px; }
.k2 small { margin-top: 10px; }
.explore { left: 876px; top: 184px; width: 428px; height: 118px; border: 4px solid #888; background: #fff; padding-left: 21px; font-size: 54.500px; line-height: 108px; font-weight: 600; }
.crumbs { left: 1495px; top: 222px; height: 40px; display: flex; align-items: center; gap: 20px; font-size: 28.600px; font-weight: 600; color: #111; }
.crumbs a { color: #2180d0; }
.hero { left: 904px; top: 358px; width: 1076px; height: 456px; border: 4px solid #888; background: #fff; font-size: 197px; line-height: 444px; text-align: center; font-weight: 600; letter-spacing: 2.200px; -webkit-text-stroke: 1.500px #3a3a3a; }
.user { left: 54px; top: 212px; width: 316px; height: 346px; }
.social { left: 54px; top: 576px; display: flex; justify-content: space-between; width: 316px; }
.social svg { width: 80px; height: 80px; margin-right: -1px; }
.sb { fill: #e8e8e8; stroke: #888; stroke-width: 4px; }
.pages { left: 410px; top: 212px; width: 400px; height: 444px; display: grid; grid-template-rows: 142px 144px 1fr; gap: 4px; padding: 4px; background: #888; font-size: 67px; }
.pages span { padding-bottom: 6px; }
.rule { left: 222px; top: 834px; width: 1880px; height: 4px; background: #c9c9c9; }
.table { left: 54px; top: 882px; width: 1232px; height: 506px; display: grid; grid-template-columns: 1fr 1fr 1fr; grid-template-rows: 248px 248px; gap: 4px; padding: 4px; background: #888; }
.table i { background: #e8e8e8; }
.thumbs { left: 1582px; top: 860px; display: grid; grid-template-columns: 188px 188px; gap: 20px; }
.thumbs svg { width: 188px; height: 188px; }
.vtrack { position: absolute; right: 2px; top: 5px; width: 14px; height: 1315px; border-radius: 7px; background: #e4e4e4; }
.vtrack i { display: block; height: 935px; border-radius: 7px; background: #9e9e9e; }
.collapse { position: absolute; left: 0; bottom: 0; width: 55px; height: 50px; background: #fdfdfb; border: solid #ccc; border-width: 1px 2px 0 0; border-radius: 0 8px 0 0; display: flex; align-items: center; justify-content: center; padding-bottom: 7px; }
.hbar { height: 26px; background: linear-gradient(#fff 18px, #d2d2d2 25px, #777); padding: 2px 0 0 6px; }
.htrack { width: 2091px; height: 14px; border-radius: 7px; background: #e4e4e4; }
.htrack i { display: block; width: 1664px; height: 14px; margin-left: 134px; border-radius: 7px; background: #9e9e9e; }

/* bottom dock */
.dock { flex: 1; background: linear-gradient(#2a3136, #2b2e38 40px); color: #a3a3a3; font-weight: 600; font-size: 28.800px; display: flex; align-items: flex-start; padding: 41px 0 0 464px; }
.group { height: 64px; border-radius: 8px; background: #434343; border: 2px solid #24272b; box-shadow: 0 3px 2px #1b1e22; display: flex; text-shadow: 0 2px 1px #222; }
.group span { flex: 1; display: flex; align-items: center; justify-content: center; gap: 10px; padding-bottom: 2px; }
.group .c2 { border-left: 2px solid #222; }
em { font: normal 13px/15px "DejaVu Sans", sans-serif; }
.g1 { width: 329px; }
.g1 .c1 { flex: 0 0 119px; gap: 14px; padding-right: 8px; padding-bottom: 5px; }
.g1 .c2 { gap: 18px; padding-right: 4px; }
.saved { width: 172px; margin: 19px 0 0 48px; font-size: 22.400px; line-height: 24px; white-space: nowrap; }
.help { margin: 18px 0 0 50px; width: 47px; font-size: 23px; line-height: 24px; }
.g2 { width: 166px; margin-left: 52px; }
.g3 { width: 190px; margin-left: 32px; }
.g3 span { justify-content: flex-start; padding-left: 27px; padding-bottom: 0; gap: 9px; }
.g3 svg { margin-bottom: 4px; }
.g4 { width: 208px; margin-left: 32px; }
.g4 .c1 { flex: 0 0 115px; gap: 8px; padding-right: 4px; }
.g5 { width: 198px; margin-left: 32px; }
.g5 .c1 { flex: 0 0 137px; }
.g5 .c2 { flex-direction: column; gap: 10px; background: linear-gradient(#2c2c2c, #2c2c2c) no-repeat 0 29px / 100% 2px; padding-bottom: 4px; }

/* browser side rail */
.side { width: 92px; background: #f7f7f7; display: flex; flex-direction: column; align-items: center; gap: 44px; padding-top: 26px; }
.side svg { width: 34px; height: 40px; }
.side .add { margin-top: 7px; }
.sdiv { width: 56px; height: 2px; background: #bbb; margin-top: 720px; }
.side .b1 { margin: -18px 0 0; }

/* taskbar */
.taskbar { height: 80px; flex: none; display: flex; background: linear-gradient(90deg, #21383f, #20343f 50%, #1c2e41 70%, #1b2742 85%); color: #fff; position: relative; }
.start { width: 96px; padding: 24px 0 0 32px; }
.tsearch { width: 688px; border: 2px solid #bdbdbd; background: #f2f2f2; color: #222; display: flex; align-items: center; font-size: 28.100px; padding-left: 22px; }
.tsearch span { margin-left: 22px; width: 455px; white-space: nowrap; }
.apps { display: flex; gap: 2px; }
.apps span { width: 96px; display: flex; align-items: center; justify-content: center; }
.apps span:first-child { margin-right: -4px; }
.apps .tv { margin-right: 6px; padding-left: 2px; }
.run { background: linear-gradient(#76b9ed, #76b9ed) no-repeat 8px 76px / 80px 4px; }
.act { background: linear-gradient(#76b9ed, #76b9ed) no-repeat 0 76px / 96px 4px, #4e6067; }
.weather { display: flex; align-items: center; margin-left: 43px; gap: 15px; font-size: 26.400px; width: 160px; letter-spacing: -.3px; }
.tray { display: flex; }
.tray span { width: 64px; display: flex; align-items: center; justify-content: center; }
.tray .cam { padding-left: 3px; }
.tray .pen { padding-left: 16px; }
.clock { width: 170px; display: flex; flex-direction: column; align-items: center; font-size: 22.900px; line-height: 36px; padding-top: 4px; margin-left: -2px; }
.notif { padding: 22px 0 0 6px; }
.badge { font: 24px "Noto Sans", sans-serif; fill: #fff; }
```
